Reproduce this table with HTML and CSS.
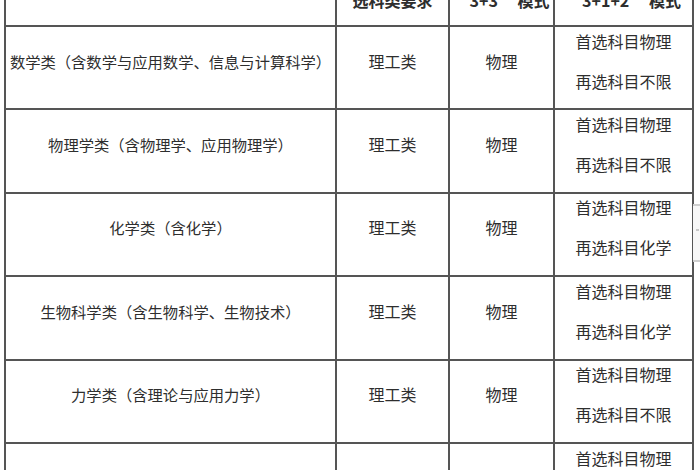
FILE: index.html
```html
<!DOCTYPE html>
<html lang="zh">
<head>
<meta charset="utf-8">
<link rel="stylesheet" href="styles.css">
</head>
<body>
<div class="page">
  <table class="subjects">
    <colgroup>
      <col class="c1"><col class="c2"><col class="c3"><col class="c4">
    </colgroup>
    <thead>
      <tr>
        <th class="h1">专业类</th>
        <th>选科类要求</th>
        <th>“3+3” 模式</th>
        <th>“3+1+2” 模式</th>
      </tr>
    </thead>
    <tbody>
      <tr>
        <td class="name">数学类（含数学与应用数学、信息与计算科学）</td>
        <td>理工类</td>
        <td>物理</td>
        <td><div class="l1">首选科目物理</div><div>再选科目不限</div></td>
      </tr>
      <tr>
        <td class="name">物理学类（含物理学、应用物理学）</td>
        <td>理工类</td>
        <td>物理</td>
        <td><div class="l1">首选科目物理</div><div>再选科目不限</div></td>
      </tr>
      <tr>
        <td class="name">化学类（含化学）</td>
        <td>理工类</td>
        <td>物理</td>
        <td><div class="l1">首选科目物理</div><div>再选科目化学</div></td>
      </tr>
      <tr>
        <td class="name">生物科学类（含生物科学、生物技术）</td>
        <td>理工类</td>
        <td>物理</td>
        <td><div class="l1">首选科目物理</div><div>再选科目化学</div></td>
      </tr>
      <tr>
        <td class="name">力学类（含理论与应用力学）</td>
        <td>理工类</td>
        <td>物理</td>
        <td><div class="l1">首选科目物理</div><div>再选科目不限</div></td>
      </tr>
      <tr>
        <td class="name">电子信息类（含电子信息工程）</td>
        <td>理工类</td>
        <td>物理</td>
        <td><div class="l1">首选科目物理</div><div>再选科目不限</div></td>
      </tr>
    </tbody>
  </table>
  <div class="side-tab"><span class="side-mark"></span></div>
</div>
</body>
</html>
```
FILE: styles.css
```css
html, body {
  margin: 0;
  padding: 0;
  background: #ffffff;
  overflow: hidden;
}
.page {
  position: relative;
  width: 700px;
  height: 470px;
  overflow: hidden;
  font-family: "Microsoft YaHei", "Noto Sans CJK SC", "Noto Sans", sans-serif;
  color: #2e2e2e;
}
.subjects {
  border-collapse: collapse;
  table-layout: fixed;
  width: 688px;
  margin: -58px 0 0 4px;
  font-size: 16px;
}
.c1 { width: 331px; }
.c2 { width: 113px; }
.c3 { width: 105px; }
.c4 { width: 139px; }
.subjects th,
.subjects td {
  border: 2px solid #555555;
  text-align: center;
  padding: 0 0 14px 0;
  vertical-align: middle;
  font-weight: normal;
  white-space: nowrap;
  letter-spacing: 0;
}
.subjects thead tr { height: 83px; }
.subjects th {
  vertical-align: bottom;
  padding-bottom: 13px;
  font-weight: bold;
  line-height: 24px;
}
.subjects th.h1 {
  vertical-align: top;
  padding: 6px 0 0 0;
}
.subjects tbody tr { height: 83.4px; }
.subjects td { line-height: 24px; }
.subjects td.name { font-size: 15.3px; }
.subjects td .l1 { margin-bottom: 16px; }
.side-tab {
  position: absolute;
  left: 693px;
  top: 204px;
  width: 10px;
  height: 54px;
  background: #f7f7f7;
  border-top: 2px solid #cfcfcf;
  border-bottom: 2px solid #cfcfcf;
}
.side-mark {
  position: absolute;
  left: 3px;
  top: 23px;
  width: 3px;
  height: 2px;
  background: #c8c8c8;
}
```
